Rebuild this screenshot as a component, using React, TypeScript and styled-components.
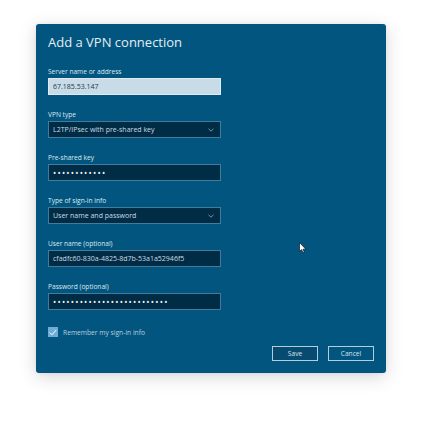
import styled, { createGlobalStyle } from "styled-components";

const GlobalStyle = createGlobalStyle`
  html, body {
    margin: 0;
    padding: 0;
    background: #ffffff;
  }
  body {
    font-family: "Open Sans", "Noto Sans", Arial, sans-serif;
  }
`;

const Page = styled.div`
  position: relative;
  width: 422px;
  height: 422px;
  padding: 24px 0 0 36px;
  box-sizing: border-box;
`;

const Dialog = styled.section`
  width: 350px;
  height: 349px;
  box-sizing: border-box;
  padding: 10px 12px 12px 12px;
  background-color: #02557f;
  border-radius: 3px;
  box-shadow: 0 4px 18px rgba(0, 0, 0, 0.16), 0 0 4px rgba(0, 0, 0, 0.06);
  display: flex;
  flex-direction: column;
`;

const Title = styled.h1`
  margin: 0 0 18px 0;
  font-size: 13px;
  line-height: 16px;
  font-weight: 400;
  color: #e4eef4;
`;

const Fields = styled.div`
  display: flex;
  flex-direction: column;
  gap: 16px;
`;

const Field = styled.div`
  display: flex;
  flex-direction: column;
  gap: 2px;
`;

const Label = styled.label`
  font-size: 6.6px;
  line-height: 8px;
  color: #dde9f0;
`;

const Box = styled.div<{ $light?: boolean }>`
  width: 173px;
  height: 17px;
  box-sizing: border-box;
  display: flex;
  align-items: center;
  justify-content: space-between;
  padding: 0 6px 0 4px;
  font-size: 7px;
  color: ${(p) => (p.$light ? "#1c3a4e" : "#c9dce8")};
  background-color: ${(p) => (p.$light ? "#c8dce7" : "#012c45")};
  border: 1px solid ${(p) => (p.$light ? "#dfebf1" : "#3f7c9e")};
`;

const Dots = styled.span`
  font-size: 8.5px;
  letter-spacing: 1.25px;
  color: #f2f7fa;
`;

const Chevron = () => (
  <svg width="6" height="4" viewBox="0 0 6 4">
    <polyline points="0.5,0.8 3,3.2 5.5,0.8" fill="none" stroke="#8fb3c8" strokeWidth="0.8" />
  </svg>
);

const CheckRow = styled.div`
  display: flex;
  align-items: center;
  gap: 5px;
  margin-top: 17px;
  font-size: 6.7px;
  color: #b9d0de;
`;

const CheckBox = styled.span`
  width: 10px;
  height: 10px;
  background-color: #6fadd6;
  display: flex;
  align-items: center;
  justify-content: center;
`;

const Buttons = styled.div`
  margin-top: auto;
  display: flex;
  justify-content: flex-end;
  gap: 10px;
`;

const Button = styled.button<{ $primary?: boolean }>`
  width: 46px;
  height: 15px;
  box-sizing: border-box;
  padding: 0;
  border: 1px solid #b4cddc;
  background-color: ${(p) => (p.$primary ? "#074c70" : "#02557f")};
  color: #d6e5ee;
  font-family: "Open Sans", "Noto Sans", Arial, sans-serif;
  font-size: 6.6px;
`;

const Cursor = styled.svg`
  position: absolute;
  left: 299px;
  top: 242px;
`;

export default function App() {
  return (
    <Page>
      <GlobalStyle />
      <Dialog>
        <Title>Add a VPN connection</Title>
        <Fields>
          <Field>
            <Label>Server name or address</Label>
            <Box $light>67.185.53.147</Box>
          </Field>
          <Field>
            <Label>VPN type</Label>
            <Box>
              L2TP/IPsec with pre-shared key
              <Chevron />
            </Box>
          </Field>
          <Field>
            <Label>Pre-shared key</Label>
            <Box>
              <Dots>{"•".repeat(12)}</Dots>
            </Box>
          </Field>
          <Field>
            <Label>Type of sign-in info</Label>
            <Box>
              User name and password
              <Chevron />
            </Box>
          </Field>
          <Field>
            <Label>User name (optional)</Label>
            <Box>cfadfc60-830a-4825-8d7b-53a1a52946f5</Box>
          </Field>
          <Field>
            <Label>Password (optional)</Label>
            <Box>
              <Dots>{"•".repeat(26)}</Dots>
            </Box>
          </Field>
        </Fields>
        <CheckRow>
          <CheckBox>
            <svg width="8" height="7" viewBox="0 0 8 7">
              <polyline points="0.8,3.6 3,5.8 7.2,1" fill="none" stroke="#ffffff" strokeWidth="1" />
            </svg>
          </CheckBox>
          Remember my sign-in info
        </CheckRow>
        <Buttons>
          <Button $primary>Save</Button>
          <Button>Cancel</Button>
        </Buttons>
      </Dialog>
      <Cursor width="8" height="12" viewBox="0 0 8 12">
        <path d="M0.5,0.5 L0.5,9.5 L2.6,7.6 L4,10.8 L5.3,10.2 L4,7.2 L6.8,7.2 Z" fill="#ffffff" stroke="#000000" strokeWidth="0.6" />
      </Cursor>
    </Page>
  );
}
